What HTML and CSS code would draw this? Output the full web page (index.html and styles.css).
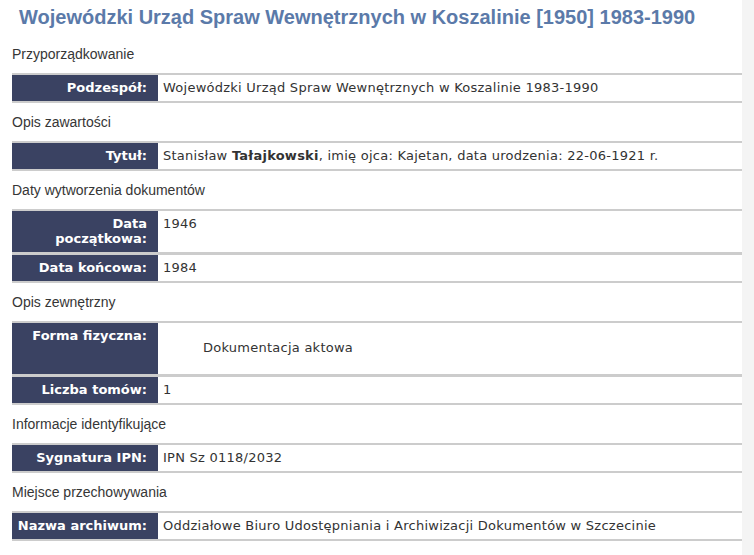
FILE: index.html
```html
<!DOCTYPE html>
<html lang="pl">
<head>
<meta charset="utf-8">
<title>Wojewódzki Urząd Spraw Wewnętrznych w Koszalinie</title>
<link rel="stylesheet" href="styles.css">
</head>
<body>
<main class="page">
  <h1 class="title">Wojewódzki Urząd Spraw Wewnętrznych w Koszalinie [1950] 1983-1990</h1>

  <h2 class="section">Przyporządkowanie</h2>
  <table class="dtable">
    <tr><th>Podzespół:</th><td>Wojewódzki Urząd Spraw Wewnętrznych w Koszalinie 1983-1990</td></tr>
  </table>

  <h2 class="section">Opis zawartości</h2>
  <table class="dtable">
    <tr><th>Tytuł:</th><td>Stanisław <b>Tałajkowski</b>, imię ojca: Kajetan, data urodzenia: 22-06-1921 r.</td></tr>
  </table>

  <h2 class="section">Daty wytworzenia dokumentów</h2>
  <table class="dtable">
    <tr><th>Data początkowa:</th><td>1946</td></tr>
    <tr><th>Data końcowa:</th><td>1984</td></tr>
  </table>

  <h2 class="section">Opis zewnętrzny</h2>
  <table class="dtable">
    <tr><th>Forma fizyczna:</th><td class="mid"><div class="indent">Dokumentacja aktowa</div></td></tr>
    <tr><th>Liczba tomów:</th><td>1</td></tr>
  </table>

  <h2 class="section">Informacje identyfikujące</h2>
  <table class="dtable">
    <tr><th>Sygnatura IPN:</th><td>IPN Sz 0118/2032</td></tr>
  </table>

  <h2 class="section">Miejsce przechowywania</h2>
  <table class="dtable">
    <tr><th>Nazwa archiwum:</th><td>Oddziałowe Biuro Udostępniania i Archiwizacji Dokumentów w Szczecinie</td></tr>
  </table>
</main>
</body>
</html>
```

FILE: styles.css
```css
html, body {
  margin: 0;
  padding: 0;
  background: #f4f4f4;
}

.page {
  width: 742px;
  min-height: 555px;
  background: #ffffff;
  padding: 0 0 0 12px;
  box-sizing: border-box;
}

.title {
  margin: 0;
  padding: 5px 0 6px 7px;
  font-family: "Liberation Sans", Arial, sans-serif;
  font-size: 20px;
  line-height: 24px;
  font-weight: bold;
  color: #5b7aa9;
}

.section {
  margin: 0;
  font-family: "Liberation Sans", Arial, sans-serif;
  font-size: 14px;
  line-height: 38px;
  font-weight: normal;
  color: #363636;
}

.dtable {
  width: 730px;
  border-collapse: separate;
  border-spacing: 0;
  border-bottom: 1px solid #cccccc;
  font-family: "DejaVu Sans", Verdana, sans-serif;
  font-size: 13px;
  line-height: 15px;
}

.dtable th,
.dtable td {
  border-top: 2px solid #cccccc;
  border-bottom: 1px solid #cccccc;
  padding: 5px 5px 6px 5px;
  vertical-align: top;
}

.dtable th {
  width: 130px;
  padding-right: 11px;
  background: #3a4262;
  color: #ffffff;
  text-align: right;
  font-weight: bold;
}

.dtable td {
  color: #333333;
  text-align: left;
  letter-spacing: 0.25px;
}

.dtable td.mid {
  vertical-align: middle;
}

.indent {
  margin: 12px 0 13px 0;
  padding-left: 40px;
}
```
